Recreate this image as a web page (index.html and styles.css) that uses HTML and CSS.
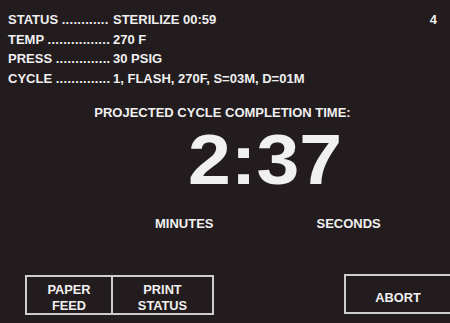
FILE: index.html
```html
<!DOCTYPE html>
<html>
<head>
<meta charset="utf-8">
<link rel="stylesheet" href="styles.css">
</head>
<body>
<div class="screen">
  <div class="header">
    <div class="status">
      <div class="row"><div class="key">STATUS <span class="leader">............</span></div><div class="val">STERILIZE 00:59</div></div>
      <div class="row"><div class="key">TEMP <span class="leader">................</span></div><div class="val">270 F</div></div>
      <div class="row"><div class="key">PRESS <span class="leader">..............</span></div><div class="val">30 PSIG</div></div>
      <div class="row"><div class="key">CYCLE <span class="leader">..............</span></div><div class="val">1, FLASH, 270F, S=03M, D=01M</div></div>
    </div>
    <div class="page">4</div>
  </div>
  <div class="title">PROJECTED CYCLE COMPLETION TIME:</div>
  <div class="time"><span class="digits">2:37</span></div>
  <div class="units"><span class="unit min">MINUTES</span><span class="unit sec">SECONDS</span></div>
  <div class="footer">
    <div class="group">
      <div class="btn paper">PAPER<br>FEED</div>
      <div class="btn print">PRINT<br>STATUS</div>
    </div>
    <div class="btn abort">ABORT</div>
  </div>
</div>
</body>
</html>
```

FILE: styles.css
```css
html, body {
  margin: 0;
  padding: 0;
  background: #231c1e;
}
body {
  width: 450px;
  height: 323px;
  overflow: hidden;
  font-family: "Liberation Sans", Arial, sans-serif;
  font-weight: bold;
  font-size: 13px;
  color: #f0f0f0;
}
.screen {
  height: 323px;
  box-sizing: border-box;
  padding: 10px 0 8px 0;
  display: flex;
  flex-direction: column;
}
.header {
  display: flex;
  justify-content: space-between;
  padding-left: 8px;
  padding-right: 13px;
}
.status {
  display: flex;
  flex-direction: column;
}
.row {
  display: grid;
  grid-template-columns: 105px auto;
  line-height: 19.7px;
  white-space: nowrap;
}
.leader {
  letter-spacing: 0.3px;
}
.page {
  line-height: 19.7px;
}
.title {
  margin-top: 14px;
  line-height: 20px;
  text-align: center;
  padding-right: 5px;
}
.time {
  margin-top: 2px;
  height: 70px;
  padding-left: 188px;
}
.digits {
  display: inline-block;
  font-size: 70px;
  line-height: 70px;
  transform: scaleX(1.1);
  transform-origin: left center;
}
.units {
  margin-top: 19px;
  line-height: 20px;
  display: flex;
  padding-left: 155px;
}
.sec {
  margin-left: 103px;
}
.footer {
  margin-top: auto;
  display: flex;
  justify-content: space-between;
  align-items: flex-end;
  padding-left: 25px;
}
.group {
  display: flex;
}
.btn {
  height: 40px;
  box-sizing: border-box;
  border: 2px solid #cdcdcd;
  text-align: center;
  line-height: 16px;
  font-size: 12.8px;
}
.paper {
  width: 88px;
  padding-top: 5px;
}
.print {
  width: 101px;
  border-left: none;
  padding-top: 5px;
}
.abort {
  width: 108px;
  margin-right: -2px;
  margin-bottom: 1px;
  padding-top: 14px;
}
```
